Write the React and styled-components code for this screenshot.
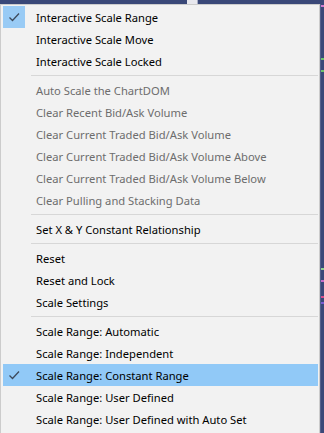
import React from 'react'
import styled, { createGlobalStyle } from 'styled-components'

const GlobalStyle = createGlobalStyle`
  html, body {
    margin: 0;
    padding: 0;
    background: #3a4878;
  }
  body {
    font-family: "Noto Sans", "Open Sans", "DejaVu Sans", sans-serif;
  }
`

const items = [
  { label: 'Interactive Scale Range', checked: true },
  { label: 'Interactive Scale Move' },
  { label: 'Interactive Scale Locked' },
  'sep',
  { label: 'Auto Scale the ChartDOM', disabled: true },
  { label: 'Clear Recent Bid/Ask Volume', disabled: true },
  { label: 'Clear Current Traded Bid/Ask Volume', disabled: true },
  { label: 'Clear Current Traded Bid/Ask Volume Above', disabled: true },
  { label: 'Clear Current Traded Bid/Ask Volume Below', disabled: true },
  { label: 'Clear Pulling and Stacking Data', disabled: true },
  'sep',
  { label: 'Set X & Y Constant Relationship' },
  'sep',
  { label: 'Reset' },
  { label: 'Reset and Lock' },
  { label: 'Scale Settings' },
  'sep',
  { label: 'Scale Range: Automatic' },
  { label: 'Scale Range: Independent' },
  { label: 'Scale Range: Constant Range', checked: true, selected: true },
  { label: 'Scale Range: User Defined' },
  { label: 'Scale Range: User Defined with Auto Set' },
]

function Check() {
  return (
    <svg width="22" height="22" viewBox="0 0 22 22">
      <path d="M6.5 11.5 L9.5 14.5 L16 7.5" fill="none" stroke="#3d4a5c" strokeWidth="1.3" />
    </svg>
  )
}

function App() {
  return (
    <Screen>
      <GlobalStyle />
      <TopBar>
        <TabMark />
      </TopBar>
      <Body>
        <Menu>
          {items.map((it, i) =>
            it === 'sep' ? (
              <Separator key={i} />
            ) : (
              <Item key={i} $selected={it.selected} $disabled={it.disabled}>
                <CheckCell $checked={it.checked && !it.selected}>
                  {it.checked && <Check />}
                </CheckCell>
                <Label>{it.label}</Label>
              </Item>
            )
          )}
        </Menu>
        <SideStrip>
          <Pixel $top={1} $color="#d37bd0" />
          <Pixel $top={54} $color="#6cc26c" />
          <Pixel $top={66} $color="#6cc26c" />
          <Pixel $top={264} $color="#8fd08f" />
          <Pixel $top={276} $color="#c46cc8" />
          <Pixel $top={292} $color="#d84a8a" />
          <Pixel $top={298} $color="#7a5ad0" />
        </SideStrip>
      </Body>
    </Screen>
  )
}

export default App

const Screen = styled.div`
  width: 324px;
  height: 433px;
  overflow: hidden;
  display: flex;
  flex-direction: column;
`
const TopBar = styled.div`
  height: 4px;
  flex: none;
  position: relative;
  background: #3a4878;
`
const TabMark = styled.div`
  position: absolute;
  left: 187px;
  top: 0;
  width: 10px;
  height: 4px;
  background: #e8e8ee;
  border-right: 1px solid #a8aec6;
`
const Body = styled.div`
  flex: 1;
  display: flex;
  min-height: 0;
`
const Menu = styled.div`
  width: 320px;
  box-sizing: border-box;
  background: #f2f2f2;
  border: 1px solid #cccccc;
  border-bottom: none;
  padding: 1px 1px 0 2px;
  display: flex;
  flex-direction: column;
`
const SideStrip = styled.div`
  flex: 1;
  position: relative;
  background: #3a4878;
  border-left: 1px solid #55608c;
`
const Pixel = styled.div`
  position: absolute;
  right: 0;
  top: ${p => p.$top}px;
  width: 3px;
  height: 2px;
  background: ${p => p.$color};
`
const Item = styled.div`
  height: 22px;
  flex: none;
  display: flex;
  align-items: center;
  background: ${p => (p.$selected ? '#91c9f7' : 'transparent')};
  color: ${p => (p.$disabled ? '#6d6d6d' : '#000000')};
  font-size: 11.2px;
  white-space: nowrap;
`
const CheckCell = styled.div`
  width: 22px;
  height: 22px;
  flex: none;
  display: flex;
  align-items: center;
  justify-content: center;
  background: ${p => (p.$checked ? '#99cbf5' : 'transparent')};
`
const Label = styled.span`
  padding-left: 11px;
`
const Separator = styled.div`
  height: 7px;
  flex: none;
  display: flex;
  align-items: center;
  padding-left: 28px;

  &::after {
    content: "";
    flex: 1;
    height: 1px;
    background: #d7d7d7;
  }
`
